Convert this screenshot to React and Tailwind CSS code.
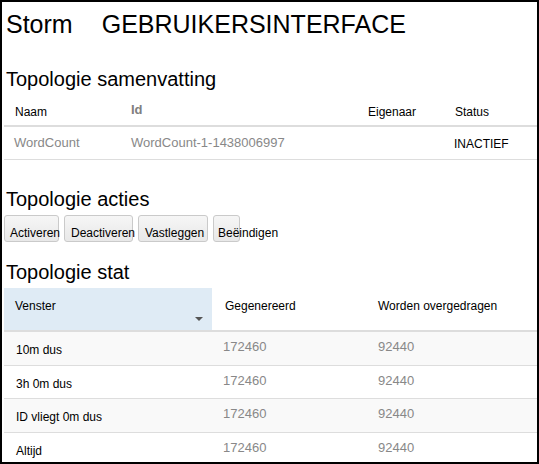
import React from 'react';

const summary = {
  name: 'WordCount',
  id: 'WordCount-1-1438006997',
  owner: '',
  status: 'INACTIEF',
};

const actions = [
  { label: 'Activeren', w: 'w-[55px]', pl: 'pl-[5px]' },
  { label: 'Deactiveren', w: 'w-[69px]', pl: 'pl-[6px]' },
  { label: 'Vastleggen', w: 'w-[70px]', pl: 'pl-[6px]' },
  { label: 'Beëindigen', w: 'w-[27px]', pl: 'pl-[4px]' },
];

const stats = [
  { window: '10m dus', emitted: '172460', transferred: '92440', h: 'h-[34px]', bg: 'bg-[#f9f9f9]' },
  { window: '3h 0m dus', emitted: '172460', transferred: '92440', h: 'h-[33px]', bg: 'bg-white' },
  { window: 'ID vliegt 0m dus', emitted: '172460', transferred: '92440', h: 'h-[34px]', bg: 'bg-[#f9f9f9]' },
  { window: 'Altijd', emitted: '172460', transferred: '92440', h: 'flex-1', bg: 'bg-white', last: true },
];

const Heading = ({ children, className = '' }) => (
  <h2 className={`pl-[2px] text-[20px] leading-[24px] font-normal text-black ${className}`}>{children}</h2>
);

export default function App() {
  return (
    <div className="w-[539px] h-[464px] overflow-hidden border-2 border-black bg-white pl-[2px] flex flex-col font-['Liberation_Sans',Arial,sans-serif] text-black">
      {/* Title */}
      <div className="mt-[7px] h-[30px] pl-[2px] flex text-[25px] leading-[30px]">
        <span>Storm</span>
        <span className="ml-[29px]">GEBRUIKERSINTERFACE</span>
      </div>

      {/* Topology summary */}
      <Heading className="mt-[28px]">Topologie samenvatting</Heading>
      <div className="grid grid-cols-[117px_237px_86px_1fr] h-[36px] border-b-2 border-[#dddddd] items-end text-[12px] leading-[14px]">
        <div className="pl-[11px] pb-[6px]">Naam</div>
        <div className="pl-[10px] pb-[8px] text-[13px] leading-[15px] font-bold text-[#808080]">Id</div>
        <div className="pl-[10px] pb-[6px]">Eigenaar</div>
        <div className="pl-[11px] pb-[6px]">Status</div>
      </div>
      <div className="grid grid-cols-[117px_237px_86px_1fr] h-[33px] border-b border-[#dddddd] items-start">
        <div className="pl-[10px] pt-[8px] text-[13px] leading-[16px] text-[#888888]">{summary.name}</div>
        <div className="pl-[10px] pt-[8px] text-[13px] leading-[16px] text-[#888888]">{summary.id}</div>
        <div className="pl-[10px] pt-[8px] text-[13px] leading-[16px]">{summary.owner}</div>
        <div className="pl-[10px] pt-[10px] text-[12px] leading-[14px]">{summary.status}</div>
      </div>

      {/* Topology actions */}
      <Heading className="mt-[27px]">Topologie acties</Heading>
      <div className="mt-[4px] flex gap-[5px]">
        {actions.map((a) => (
          <button
            key={a.label}
            className={`${a.w} ${a.pl} h-[27px] pt-[10px] flex items-start whitespace-nowrap overflow-visible text-left text-[12px] leading-[14px] text-black border border-[#cacaca] rounded-[3px] bg-linear-to-b from-[#f6f6f6] to-[#e8e8e8]`}
          >
            {a.label}
          </button>
        ))}
      </div>

      {/* Topology stats */}
      <Heading className="mt-[18px]">Topologie stat</Heading>
      <div className="mt-[4px] grid grid-cols-[208px_156px_1fr] h-[44px] border-b-2 border-[#dddddd] text-[12px] leading-[14px]">
        <div className="bg-[#dfebf5] pl-[11px] pt-[11px] flex flex-col">
          <span>Venster</span>
          <span className="mt-[4px] mr-[9px] self-end w-0 h-0 border-l-[4px] border-r-[4px] border-t-[4px] border-l-transparent border-r-transparent border-t-[#555555]" />
        </div>
        <div className="pl-[13px] pt-[11px]">Gegenereerd</div>
        <div className="pl-[10px] pt-[11px]">Worden overgedragen</div>
      </div>
      <div className="flex-1 flex flex-col">
        {stats.map((s) => (
          <div
            key={s.window}
            className={`grid grid-cols-[208px_156px_1fr] items-start ${s.h} ${s.bg} ${s.last ? '' : 'border-b border-[#dddddd]'}`}
          >
            <div className="pl-[12px] pt-[11px] text-[12px] leading-[14px]">{s.window}</div>
            <div className="pl-[11px] pt-[7px] text-[13px] leading-[16px] text-[#888888]">{s.emitted}</div>
            <div className="pl-[10px] pt-[7px] text-[13px] leading-[16px] text-[#888888]">{s.transferred}</div>
          </div>
        ))}
      </div>
    </div>
  );
}
